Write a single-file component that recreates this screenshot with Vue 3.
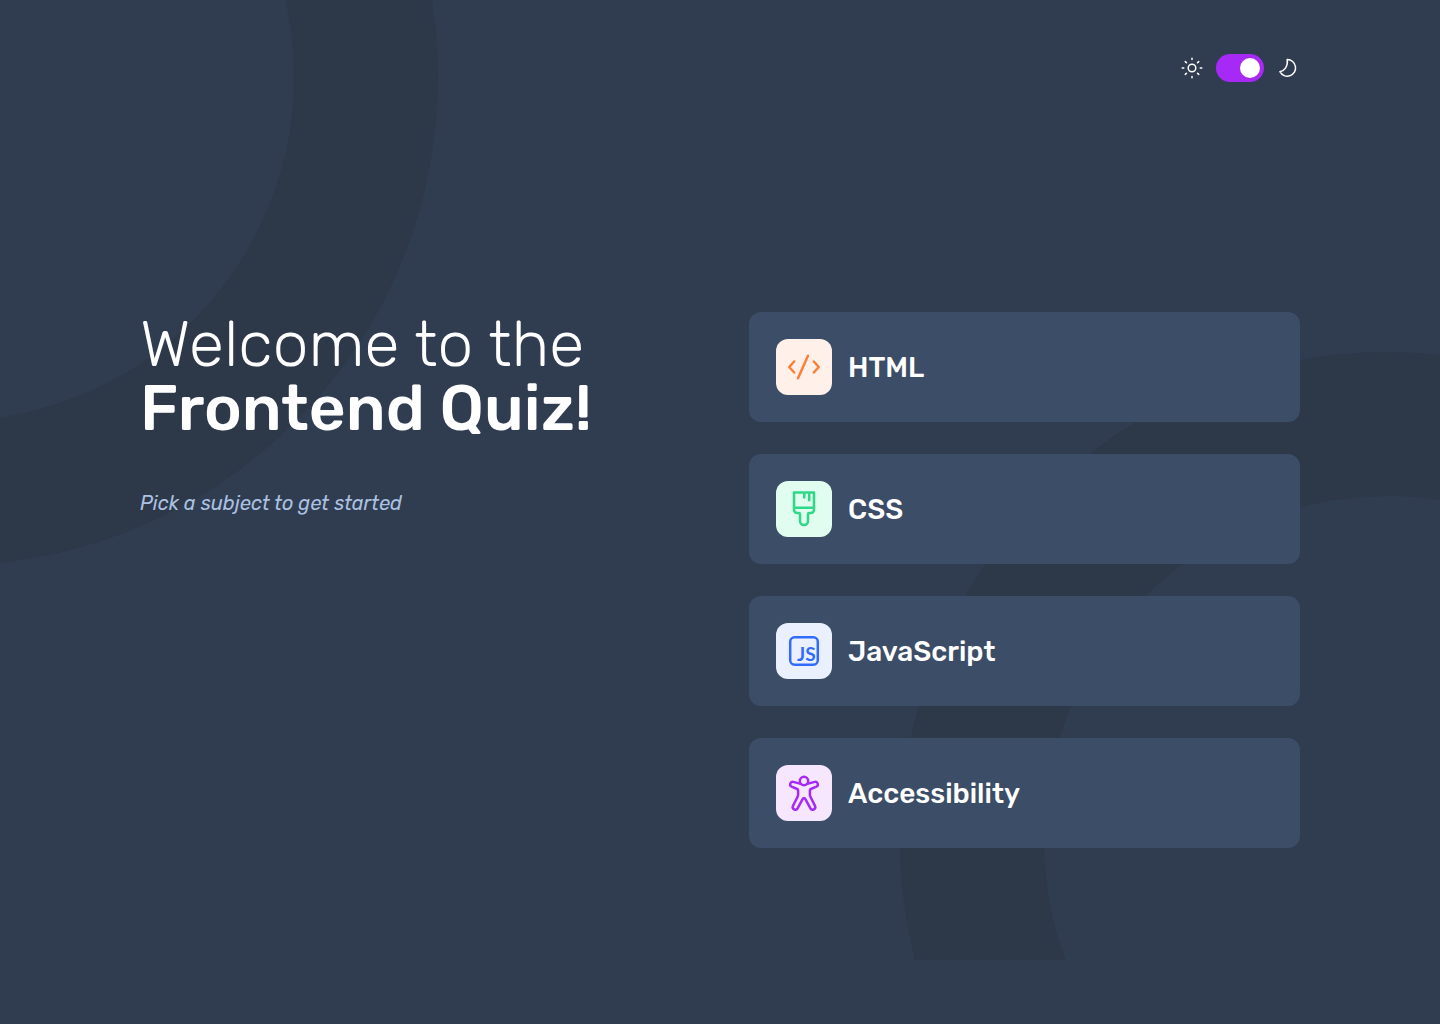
<script setup>
import { ref } from 'vue'

const dark = ref(true)
const subjects = [
  { id: 'html', label: 'HTML' },
  { id: 'css', label: 'CSS' },
  { id: 'js', label: 'JavaScript' },
  { id: 'a11y', label: 'Accessibility' },
]
</script>

<template>
  <div class="page">
    <svg class="pattern" viewBox="0 0 1440 960" fill="none" stroke-width="144" aria-hidden="true">
      <circle cx="-50" cy="77" r="416" />
      <circle cx="1388" cy="840" r="416" />
    </svg>

    <div class="container">
      <header class="header">
        <svg class="mode-icon" viewBox="0 0 24 24" aria-hidden="true">
          <circle cx="12" cy="12" r="3.8" />
          <path d="M12 2.200v1.400M12 20.400v1.400M2.200 12h1.600M20.200 12h1.600M5.300 5.600l1.200 1.200M17.500 17.200l1.200 1.200M18.700 5.600l-1.200 1.200M6.500 17.200l-1.200 1.200" />
        </svg>
        <input v-model="dark" class="switch" type="checkbox" role="switch" aria-label="Dark mode" />
        <svg class="mode-icon" viewBox="0 0 24 24" aria-hidden="true">
          <path d="M11.200 3.600a8.300 8.300 0 1 1-7.300 12.100c4.600-.8 8.300-5.600 7.300-12.100z" />
        </svg>
      </header>

      <main class="main">
        <section class="intro">
          <h1 class="title">Welcome to the <strong>Frontend Quiz!</strong></h1>
          <p class="hint">Pick a subject to get started</p>
        </section>

        <ul class="subjects">
          <li v-for="subject in subjects" :key="subject.id">
            <button class="subject" type="button">
              <span class="badge" :class="subject.id">
                <svg v-if="subject.id === 'html'" viewBox="0 0 40 40" aria-hidden="true">
                  <path d="M10.200 14.500L5.200 20l5 5.500M29.800 14.500L34.800 20l-5 5.500M24 8.700L14 31.300" />
                </svg>
                <svg v-else-if="subject.id === 'css'" viewBox="0 0 40 40" aria-hidden="true">
                  <path d="M10 3.600h20v17.200a3.200 3.200 0 0 1-3.200 3.200h-1.600a1.200 1.200 0 0 0-1.200 1.200v6.800a4 4 0 0 1-8 0v-6.800a1.200 1.200 0 0 0-1.200-1.200h-1.600a3.200 3.200 0 0 1-3.200-3.200zM10 18.700h20M20.300 3.600v4.800M25.200 3.600v7.600" />
                </svg>
                <svg v-else-if="subject.id === 'js'" viewBox="0 0 40 40" aria-hidden="true">
                  <rect x="6.200" y="6.200" width="27.600" height="27.600" rx="4.500" />
                  <text x="13" y="30">JS</text>
                </svg>
                <svg v-else viewBox="0 0 40 40" aria-hidden="true">
                  <circle cx="20" cy="8" r="4.200" />
                  <path d="M16.800 10.900L9.200 8.900a2.500 2.500 0 0 0-1.600 4.700l5.500 2.400a1.700 1.700 0 0 1 1 1.600v4.200a5 5 0 0 1-.5 2L9 32.900a2.600 2.600 0 0 0 4.700 2.300l4.900-9.100a1.600 1.600 0 0 1 2.800 0l4.900 9.100a2.600 2.600 0 0 0 4.700-2.300l-4.600-9.100a5 5 0 0 1-.5-2v-4.200a1.700 1.700 0 0 1 1-1.600l5.500-2.400a2.500 2.500 0 0 0-1.600-4.700l-7.600 2" />
                </svg>
              </span>
              {{ subject.label }}
            </button>
          </li>
        </ul>
      </main>
    </div>
  </div>
</template>

<style>
body {
  background: #303c50;
}
</style>

<style scoped>
.page {
  position: relative;
  min-height: 100vh;
  overflow: hidden;
  box-sizing: border-box;
  padding: 54px 24px;
  background: #303c50;
  color: #fff;
  font-family: Rubik, Roboto, sans-serif;
}

.pattern {
  position: absolute;
  top: 0;
  left: 0;
  width: 100%;
  stroke: #2d3949;
}

.container {
  position: relative;
  max-width: 1160px;
  margin: 0 auto;
}

.header {
  display: flex;
  align-items: center;
  justify-content: flex-end;
  gap: 12px;
}

.mode-icon {
  width: 24px;
  height: 24px;
  fill: none;
  stroke: #fff;
  stroke-width: 1.5;
  stroke-linecap: round;
  stroke-linejoin: round;
}

.switch {
  appearance: none;
  display: flex;
  box-sizing: border-box;
  width: 48px;
  height: 28px;
  margin: 0;
  padding: 4px;
  border-radius: 14px;
  background: #a729f5;
  cursor: pointer;
}

.switch::before {
  content: "";
  width: 20px;
  height: 20px;
  border-radius: 50%;
  background: #fff;
}

.switch:checked {
  justify-content: flex-end;
}

.main {
  display: grid;
  grid-template-columns: 1fr 1fr;
  column-gap: 58px;
  margin-top: 230px;
}

.title {
  margin: 0 0 48px;
  font-size: 64px;
  line-height: 64px;
  font-weight: 300;
}

.title strong {
  display: block;
  font-weight: 500;
}

.hint {
  margin: 0;
  color: #abc1e1;
  font-size: 20px;
  line-height: 30px;
  font-style: italic;
}

.subjects {
  display: grid;
  gap: 32px;
  margin: 0;
  padding: 0;
  list-style: none;
}

.subject {
  display: flex;
  align-items: center;
  gap: 16px;
  width: 100%;
  padding: 24px;
  border: 3px solid #3c4d67;
  border-radius: 12px;
  background: #3c4d67;
  color: inherit;
  font-family: inherit;
  font-size: 28px;
  line-height: normal;
  font-weight: 500;
  text-align: left;
  cursor: pointer;
}

.badge {
  display: grid;
  place-items: center;
  width: 56px;
  height: 56px;
  border-radius: 12px;
}

.badge svg {
  width: 40px;
  height: 40px;
  fill: none;
  stroke: currentColor;
  stroke-width: 2.5;
  stroke-linecap: round;
  stroke-linejoin: round;
}

.badge text {
  fill: currentColor;
  stroke: none;
  font-family: Lato, sans-serif;
  font-size: 19px;
  font-weight: 700;
}

.html {
  background: #fff1e9;
  color: #ff7e35;
}

.css {
  background: #e0fdef;
  color: #2fd887;
}

.js {
  background: #ebf0ff;
  color: #306aff;
}

.a11y {
  background: #f6e7ff;
  color: #a729f5;
}
</style>
